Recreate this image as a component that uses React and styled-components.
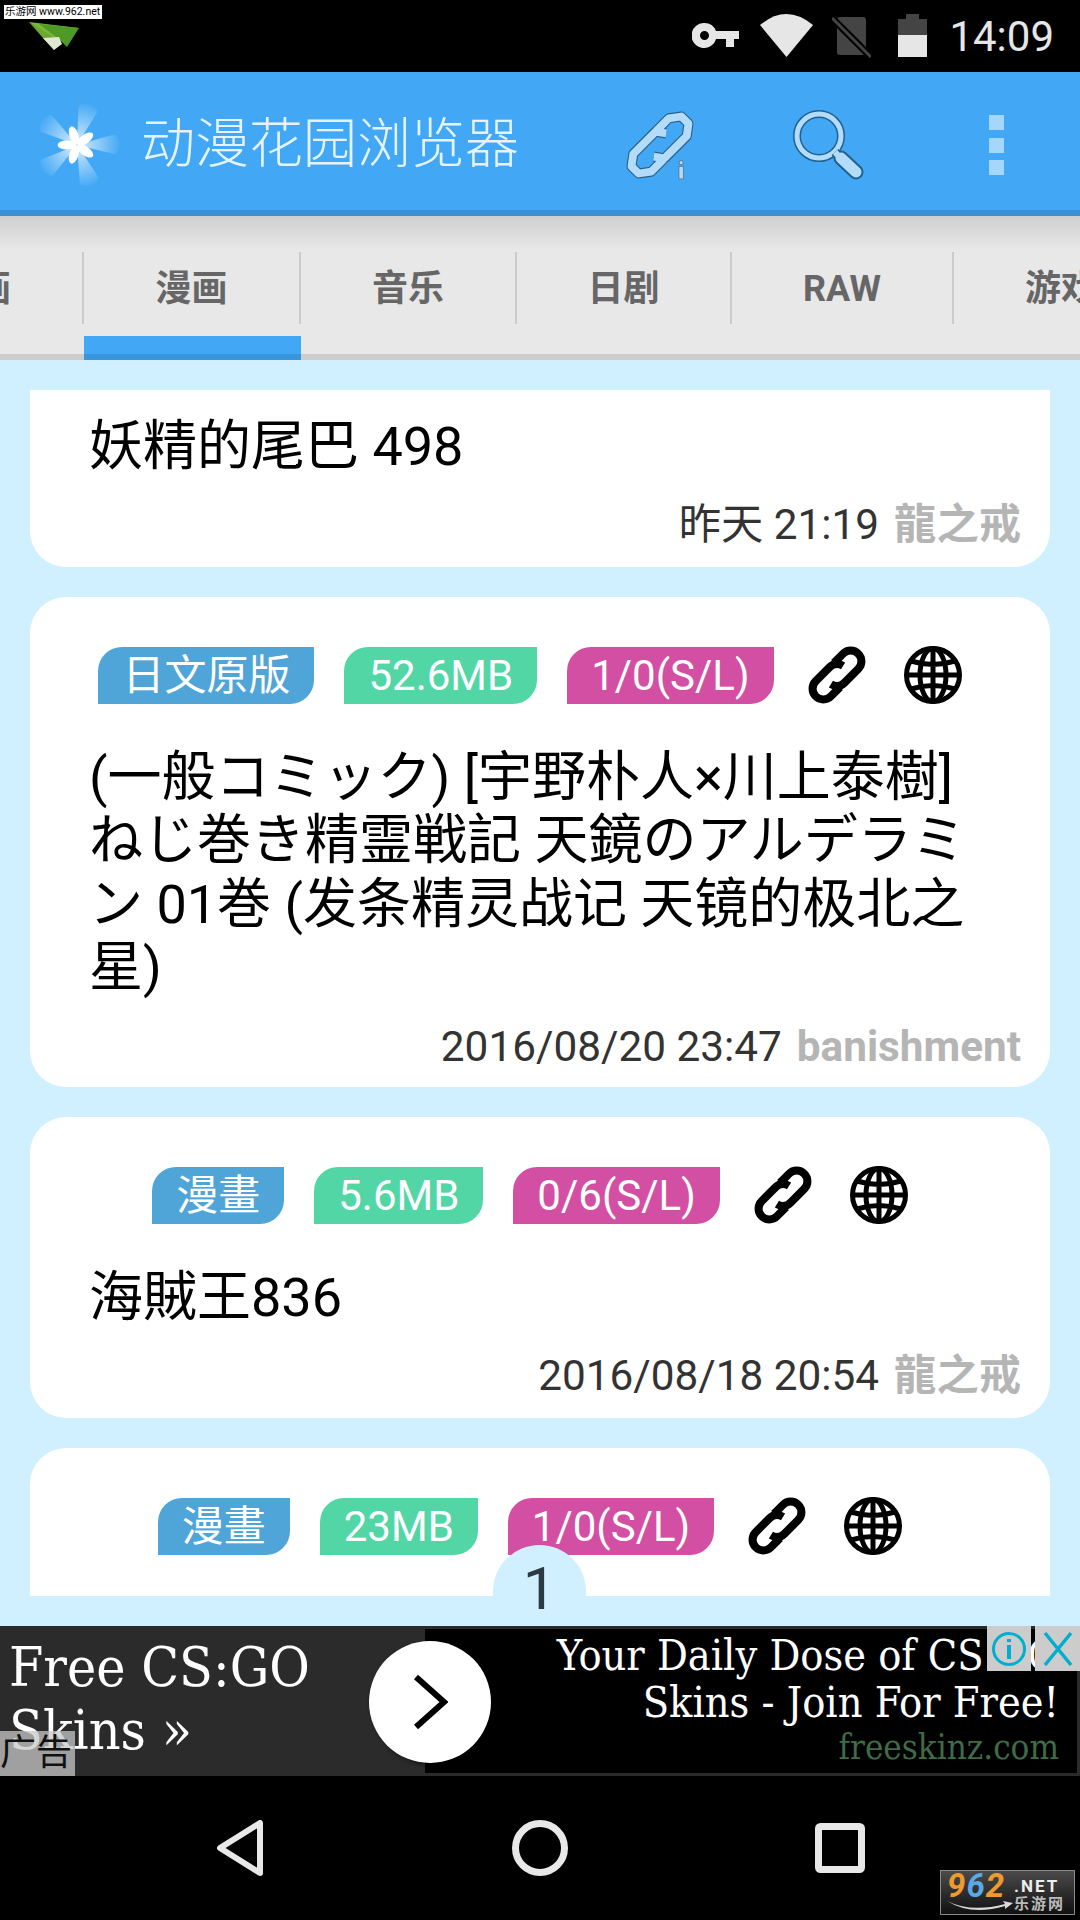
import React from 'react'
import styled, { createGlobalStyle } from 'styled-components'

const GlobalStyle = createGlobalStyle`
    html, body {
        margin: 0;
        padding: 0;
        background: #000;
    }
    body {
        font-family: Roboto, "Noto Sans CJK SC", sans-serif;
    }
`
const Screen = styled.div`
    width: 1080px;
    height: 1920px;
    display: flex;
    flex-direction: column;
    overflow: hidden;
    position: relative;
`
const StatusBar = styled.div`
    height: 72px;
    flex: none;
    background: #000;
    display: flex;
    justify-content: space-between;
    box-sizing: border-box;
`
const StatusLeft = styled.div`
    display: flex;
    flex-direction: column;
    padding: 5px 0 0 4px;
`
const Watermark = styled.div`
    width: 98px;
    height: 14px;
    background: #fff;
    color: #000;
    font-size: 10.5px;
    line-height: 14px;
    white-space: nowrap;
    padding-left: 1px;
    box-sizing: border-box;
    overflow: hidden;
`
const PlaneIcon = styled.svg`
    width: 50px;
    height: 28px;
    margin: 3px 0 0 25px;
`
const StatusRight = styled.div`
    display: flex;
    align-items: flex-start;
    padding-right: 26px;
`
const StatusIcon = styled.svg`
    display: block;
    flex: none;
    margin-top: ${p => p.$top}px;
    margin-left: ${p => p.$left}px;
`
const Clock = styled.div`
    margin-left: 22px;
    font-size: 42px;
    line-height: 74px;
    color: #e6e6e6;
`
const AppBar = styled.div`
    height: 144px;
    flex: none;
    box-sizing: border-box;
    background: #42a8f5;
    border-bottom: 6px solid #3a8fd2;
    display: flex;
    align-items: center;
    padding: 8px 76px 0 22px;
`
const Logo = styled.svg`
    width: 110px;
    height: 110px;
    flex: none;
`
const AppTitle = styled.div`
    margin-left: 9px;
    font-size: 54px;
    line-height: 64px;
    color: #e4f3fe;
    font-weight: 300;
    white-space: nowrap;
`
const BarActions = styled.div`
    margin-left: auto;
    display: flex;
    align-items: center;
`
const ActionIcon = styled.svg`
    display: block;
    flex: none;
    overflow: visible;
    margin-left: ${p => p.$left || 0}px;
`
const DotsColumn = styled.div`
    margin-left: 124px;
    display: flex;
    flex-direction: column;
    gap: 7.5px;
`
const Dot = styled.div`
    width: 15px;
    height: 15px;
    background: #a5d6fb;
`
const TabBar = styled.div`
    height: 144px;
    flex: none;
    display: flex;
    margin-left: -132px;
    width: 1400px;
    background:
        linear-gradient(to bottom, #cfcfcf 0, #e8e8e8 34px, #e8e8e8 138px, #cdcdcd 138px);
`
const Tab = styled.div`
    width: ${p => p.$width}px;
    flex: none;
    box-sizing: border-box;
    padding: 36px 0;
    background: ${p => p.$active
        ? 'linear-gradient(to bottom, transparent 120px, #42a8f5 120px, #42a8f5 138px, #3a96dc 138px)'
        : 'transparent'};
`
const TabLabel = styled.div`
    height: 72px;
    box-sizing: border-box;
    padding-top: 2px;
    border-right: 2px solid #cbcbcb;
    display: flex;
    align-items: center;
    justify-content: center;
    font-size: 36px;
    line-height: 40px;
    font-weight: 700;
    color: #666;
`
const Content = styled.div`
    flex: 1;
    min-height: 0;
    background: #d0efff;
    padding: 30px;
    display: flex;
    flex-direction: column;
    gap: 30px;
    overflow: hidden;
    box-sizing: border-box;
    position: relative;
`
const Card = styled.div`
    background: #fff;
    flex: none;
    box-sizing: border-box;
    border-radius: ${p => p.$clip === 'top' ? '0 0 36px 36px' : p.$clip === 'bottom' ? '36px 36px 0 0' : '36px'};
    height: ${p => p.$height}px;
    padding-top: ${p => p.$clip === 'top' ? 25 : 49}px;
    overflow: hidden;
`
const ChipRow = styled.div`
    display: flex;
    align-items: center;
    justify-content: center;
    padding-right: 20px;
    margin-bottom: 42px;
`
const Chip = styled.div`
    height: 57px;
    line-height: 57px;
    padding: 0 24px;
    margin-right: 30px;
    color: #fff;
    font-size: 42px;
    white-space: nowrap;
    background: ${p => p.$color};
    border-radius: 24px 0 24px 0;
`
const LinkSvg = styled.svg`
    width: 58px;
    height: 58px;
    flex: none;
    margin-left: 4px;
`
const GlobeSvg = styled.svg`
    width: 58px;
    height: 58px;
    flex: none;
    margin-left: 38px;
`
const Title = styled.div`
    padding-left: 59px;
    font-size: 54px;
    color: #000;
`
const TitleLine = styled.div`
    height: 63.4px;
    line-height: 63.4px;
    white-space: nowrap;
`
const Meta = styled.div`
    display: flex;
    justify-content: flex-end;
    gap: 15px;
    padding-right: 29px;
    margin-top: 22px;
    font-size: 42.3px;
    line-height: 50px;
    white-space: nowrap;
`
const MetaDate = styled.span`
    color: #333;
`
const MetaAuthor = styled.span`
    color: #b5b5b5;
    font-weight: 700;
`
const PageBadge = styled.div`
    position: absolute;
    left: 493px;
    top: 1185px;
    width: 93px;
    height: 93px;
    border-radius: 50%;
    background: #d0efff;
    color: #2b3a42;
    font-size: 60px;
    line-height: 87px;
    text-align: center;
`
const AdBanner = styled.div`
    height: 150px;
    flex: none;
    background: #2b2b2b;
    display: flex;
    position: relative;
    overflow: hidden;
`
const AdLeft = styled.div`
    width: 425px;
    flex: none;
    box-sizing: border-box;
    padding: 10px 0 0 9px;
    color: #fff;
    font-family: "DejaVu Serif", serif;
    font-stretch: condensed;
    font-size: 55px;
    line-height: 63px;
    white-space: nowrap;
`
const AdButton = styled.div`
    position: absolute;
    left: 369px;
    top: 15px;
    width: 122px;
    height: 122px;
    border-radius: 50%;
    background: #fff;
    box-shadow: 2px 2px 4px #0008;
    display: flex;
    align-items: center;
    justify-content: center;
`
const AdRight = styled.div`
    flex: 1;
    margin: 3px 3px 3px 0;
    background: #000;
    box-sizing: border-box;
    padding: 3px 18px 0 0;
    text-align: right;
    font-family: "DejaVu Serif", serif;
    font-stretch: condensed;
    white-space: nowrap;
    color: #fff;
    font-size: 42.8px;
    line-height: 47px;
`
const AdLink = styled.div`
    color: #3f6b47;
    font-size: 34.7px;
    line-height: 42px;
`
const AdTag = styled.div`
    position: absolute;
    left: 0;
    bottom: 0;
    width: 75px;
    height: 45px;
    background: rgba(200, 200, 200, 0.75);
    color: #111;
    font-size: 36px;
    line-height: 45px;
    white-space: nowrap;
    overflow: hidden;
`
const AdControls = styled.div`
    position: absolute;
    right: 0;
    top: 0;
    display: flex;
    gap: 4px;
`
const AdControl = styled.div`
    width: ${p => p.$width}px;
    height: 45px;
    background: #ccc;
    display: flex;
    align-items: center;
    justify-content: center;
`
const NavBar = styled.div`
    height: 144px;
    flex: none;
    box-sizing: border-box;
    background: #000;
    display: flex;
    align-items: flex-start;
    padding: 44px 0 0 217px;
`
const NavIcon = styled.svg`
    display: block;
    flex: none;
    margin-left: ${p => p.$left}px;
    margin-top: ${p => p.$top || 0}px;
`
const SiteBadge = styled.div`
    position: absolute;
    right: 5px;
    bottom: 5px;
    width: 135px;
    height: 45px;
    box-sizing: border-box;
    border: 1px solid #8a8a8a;
    background: linear-gradient(to bottom, #4a4a4a, #111);
    display: flex;
    padding: 1px 0 0 6px;
    gap: 1px;
    overflow: hidden;
`
const BadgeMark = styled.div`
    display: flex;
    flex-direction: column;
`
const BadgeNum = styled.div`
    font-size: 33px;
    line-height: 28px;
    font-weight: 700;
    font-style: italic;
    letter-spacing: 1px;
    color: #ee9a2f;
`
const BadgeNumBlue = styled.span`
    color: #5aa9e6;
`
const Swoosh = styled.svg`
    display: block;
    width: 66px;
    height: 12px;
`
const BadgeSide = styled.div`
    display: flex;
    flex-direction: column;
    line-height: 1;
    padding-top: 6px;
`
const BadgeNet = styled.div`
    font-size: 17px;
    font-weight: 700;
    letter-spacing: 2px;
    color: #eee;
`
const BadgeCn = styled.div`
    font-size: 15px;
    font-weight: 700;
    letter-spacing: 2px;
    color: #bbb;
    margin-top: 2px;
`

const CHAIN = [
    'M10 -2Q8 -10 0 -10H-18A10 10 0 0 0 -18 10H-6',
    'M-10 2Q-8 10 0 10H18A10 10 0 0 0 18 -10H6',
]
// the toolbar version has cut corners instead of round ends
const CHAIN_CUT = [
    'M10 -3L5 -10H-20L-28 -4V4L-20 10H-6',
    'M-10 3L-5 10H20L28 4V-4L20 -10H6',
]

function ChainPaths({ stroke, width, paths = CHAIN }) {
    return (
        <g transform="rotate(-45)" fill="none" stroke={stroke} strokeWidth={width} strokeLinejoin="round">
            {paths.map(d => <path key={d} d={d} />)}
        </g>
    )
}

function RowIcons() {
    return (
        <>
            <LinkSvg viewBox="-27 -27 54 54">
                <ChainPaths stroke="#000" width={7.5} />
            </LinkSvg>
            <GlobeSvg viewBox="0 0 58 58">
                <g fill="none" stroke="#000" strokeWidth="5">
                    <circle cx="29" cy="29" r="26.5" />
                    <ellipse cx="29" cy="29" rx="13" ry="26.5" />
                    <path d="M29 3V55M3 29H55M7 15Q29 22 51 15M7 43Q29 36 51 43" />
                </g>
            </GlobeSvg>
        </>
    )
}

function Post({ chips, lines, date, author, clip, height }) {
    return (
        <Card $clip={clip} $height={height}>
            {chips && (
                <ChipRow>
                    {chips.map(c => <Chip key={c.text} $color={c.color}>{c.text}</Chip>)}
                    <RowIcons />
                </ChipRow>
            )}
            {lines && (
                <Title>
                    {lines.map(l => <TitleLine key={l}>{l}</TitleLine>)}
                </Title>
            )}
            {date && (
                <Meta>
                    <MetaDate>{date}</MetaDate>
                    <MetaAuthor>{author}</MetaAuthor>
                </Meta>
            )}
        </Card>
    )
}

const BLUE = '#4fa5d8'
const GREEN = '#53d6a5'
const PINK = '#d24fa3'

export default function App() {
    return (
        <Screen>
            <GlobalStyle />
            <StatusBar>
                <StatusLeft>
                    <Watermark>乐游网 www.962.net</Watermark>
                    <PlaneIcon viewBox="0 0 50 28">
                        <polygon points="0,0 50,6 26,18" fill="#7bb83a" />
                        <polygon points="10,2 50,6 38,25 31,18" fill="#4f9a26" />
                        <polygon points="0,0 28,17 25,28 14,16" fill="#6aa92f" />
                        <polygon points="14,16 30,15 33,22 25,28" fill="#dfe8d2" />
                    </PlaneIcon>
                </StatusLeft>
                <StatusRight>
                    <StatusIcon width="47" height="25" viewBox="0 0 47 25" $top={23} $left={0}>
                        <path fillRule="evenodd" fill="#e6e6e6" d="M12.5 0A12.5 12.5 0 0 1 24 8H47V16H42V24H34V16H24A12.5 12.5 0 1 1 12.5 0ZM12.5 8A4.5 4.5 0 1 0 12.5 17A4.5 4.5 0 1 0 12.5 8Z" />
                    </StatusIcon>
                    <StatusIcon width="53" height="43" viewBox="0 0 53 43" $top={14} $left={21}>
                        <path fill="#e6e6e6" d="M0 11Q26.5 -11 53 11L26.5 43Z" />
                    </StatusIcon>
                    <StatusIcon width="39" height="41" viewBox="0 0 39 41" $top={17} $left={19}>
                        <rect x="5" y="0" width="29" height="38" rx="3" fill="#444" />
                        <path stroke="#000" strokeWidth="7" d="M0 1L39 40" />
                        <path stroke="#444" strokeWidth="3" d="M0 1L39 40" />
                    </StatusIcon>
                    <StatusIcon width="29" height="43" viewBox="0 0 29 43" $top={14} $left={27}>
                        <path fill="#444" d="M8 0H21V5H29V21H0V5H8Z" />
                        <rect y="21" width="29" height="22" fill="#e6e6e6" />
                    </StatusIcon>
                    <Clock>14:09</Clock>
                </StatusRight>
            </StatusBar>

            <AppBar>
                <Logo viewBox="-55 -55 110 110">
                    <defs>
                        <radialGradient id="glow" gradientUnits="userSpaceOnUse" cx="0" cy="0" r="44">
                            <stop offset="0" stopColor="#fff" stopOpacity="0.8" />
                            <stop offset="1" stopColor="#fff" stopOpacity="0" />
                        </radialGradient>
                    </defs>
                    {[17, 89, 161, 233, 305].map(a => (
                        <path key={a} transform={`rotate(${a})`} d="M0 0L-10 -38Q0 -48 10 -38Z" fill="url(#glow)" />
                    ))}
                    {[-18, 54, 126, 198, 270].map(a => (
                        <ellipse key={a} transform={`rotate(${a})`} cx="0" cy="-10" rx="4.5" ry="9.5" fill="#fff" />
                    ))}
                </Logo>
                <AppTitle>动漫花园浏览器</AppTitle>
                <BarActions>
                    <ActionIcon width="68" height="68" viewBox="-27 -27 54 54">
                        <ChainPaths stroke="#2a5f88" width={8} paths={CHAIN_CUT} />
                        <ChainPaths stroke="#b3dcfb" width={6.2} paths={CHAIN_CUT} />
                        <rect x="15" y="17" width="3.6" height="10" fill="#b3dcfb" stroke="#5f7f96" strokeWidth="0.8" />
                        <circle cx="16.8" cy="14" r="1.6" fill="#b3dcfb" stroke="#5f7f96" strokeWidth="0.8" />
                    </ActionIcon>
                    <ActionIcon width="72" height="72" viewBox="0 0 72 72" $left={99}>
                        <circle cx="26" cy="27" r="22" fill="none" stroke="#21618f" strokeWidth="8" />
                        <circle cx="26" cy="27" r="22" fill="none" stroke="#b3dcfb" strokeWidth="5" />
                        <path d="M48 49L63 63" stroke="#21618f" strokeWidth="15" strokeLinecap="round" />
                        <path d="M42 43L50 52" stroke="#21618f" strokeWidth="9" />
                        <path d="M42 43L50 52" stroke="#b3dcfb" strokeWidth="6" />
                        <path d="M48 49L63 63" stroke="#b3dcfb" strokeWidth="11" strokeLinecap="round" />
                    </ActionIcon>
                    <DotsColumn>
                        <Dot /><Dot /><Dot />
                    </DotsColumn>
                </BarActions>
            </AppBar>

            <TabBar>
                <Tab $width={216}><TabLabel>动画</TabLabel></Tab>
                <Tab $width={217} $active><TabLabel>漫画</TabLabel></Tab>
                <Tab $width={216}><TabLabel>音乐</TabLabel></Tab>
                <Tab $width={215}><TabLabel>日剧</TabLabel></Tab>
                <Tab $width={222}><TabLabel>RAW</TabLabel></Tab>
                <Tab $width={216}><TabLabel>游戏</TabLabel></Tab>
            </TabBar>

            <Content>
                <Post clip="top" height={177} lines={['妖精的尾巴 498']} date="昨天 21:19" author="龍之戒" />
                <Post
                    height={490}
                    chips={[
                        { text: '日文原版', color: BLUE },
                        { text: '52.6MB', color: GREEN },
                        { text: '1/0(S/L)', color: PINK },
                    ]}
                    lines={[
                        '(一般コミック) [宇野朴人×川上泰樹]',
                        'ねじ巻き精霊戦記 天鏡のアルデラミ',
                        'ン 01巻 (发条精灵战记 天镜的极北之',
                        '星)',
                    ]}
                    date="2016/08/20 23:47"
                    author="banishment"
                />
                <Post
                    height={301}
                    chips={[
                        { text: '漫畫', color: BLUE },
                        { text: '5.6MB', color: GREEN },
                        { text: '0/6(S/L)', color: PINK },
                    ]}
                    lines={['海賊王836']}
                    date="2016/08/18 20:54"
                    author="龍之戒"
                />
                <Post
                    clip="bottom"
                    height={148}
                    chips={[
                        { text: '漫畫', color: BLUE },
                        { text: '23MB', color: GREEN },
                        { text: '1/0(S/L)', color: PINK },
                    ]}
                />
                <PageBadge>1</PageBadge>
            </Content>

            <AdBanner>
                <AdLeft>Free CS:GO<br />Skins »</AdLeft>
                <AdRight>
                    Your Daily Dose of CS:GO<br />
                    Skins - Join For Free!
                    <AdLink>freeskinz.com</AdLink>
                </AdRight>
                <AdButton>
                    <svg width="36" height="56" viewBox="0 0 36 56">
                        <path d="M4 3L32 28L4 53" fill="none" stroke="#000" strokeWidth="6" />
                    </svg>
                </AdButton>
                <AdTag>广告</AdTag>
                <AdControls>
                    <AdControl $width={44}>
                        <svg width="36" height="36" viewBox="0 0 36 36">
                            <circle cx="18" cy="18" r="15.5" fill="none" stroke="#00aecd" strokeWidth="3" />
                            <path d="M18 14V28M18 8V11" stroke="#00aecd" strokeWidth="4" />
                        </svg>
                    </AdControl>
                    <AdControl $width={45}>
                        <svg width="32" height="36" viewBox="0 0 32 36">
                            <path d="M3 2L29 34M29 2L3 34" stroke="#00aecd" strokeWidth="3.5" />
                        </svg>
                    </AdControl>
                </AdControls>
            </AdBanner>

            <NavBar>
                <NavIcon width="46" height="56" viewBox="0 0 46 56" $left={0}>
                    <path d="M43 3V53L3 28Z" fill="none" stroke="#e8e8e8" strokeWidth="6" strokeLinejoin="round" />
                </NavIcon>
                <NavIcon width="56" height="56" viewBox="0 0 56 56" $left={249}>
                    <circle cx="28" cy="28" r="24.5" fill="none" stroke="#e8e8e8" strokeWidth="7" />
                </NavIcon>
                <NavIcon width="50" height="50" viewBox="0 0 50 50" $left={247} $top={3}>
                    <rect x="3.5" y="3.5" width="43" height="43" rx="2" fill="none" stroke="#e8e8e8" strokeWidth="7" />
                </NavIcon>
            </NavBar>
            <SiteBadge>
                <BadgeMark>
                    <BadgeNum>9<BadgeNumBlue>6</BadgeNumBlue>2</BadgeNum>
                    <Swoosh viewBox="0 0 66 12">
                        <path d="M0 1Q24 13 58 4L56 1L66 3L58 9L58 6Q24 16 0 1Z" fill="#d8d8d8" />
                    </Swoosh>
                </BadgeMark>
                <BadgeSide>
                    <BadgeNet>.NET</BadgeNet>
                    <BadgeCn>乐游网</BadgeCn>
                </BadgeSide>
            </SiteBadge>
        </Screen>
    )
}
